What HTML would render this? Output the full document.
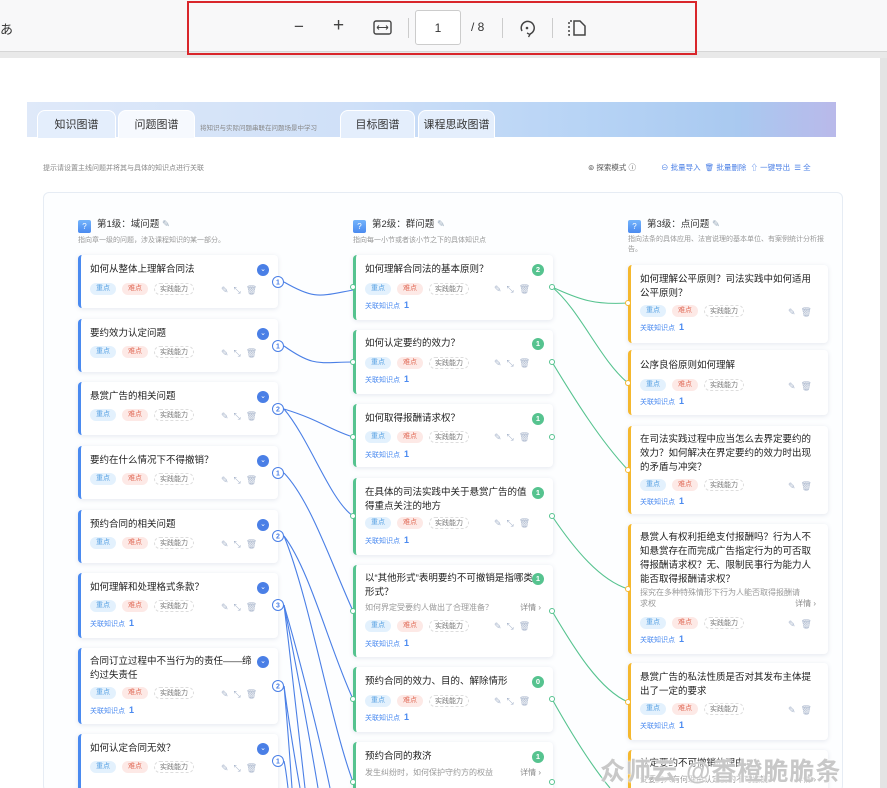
<!DOCTYPE html>
<html><head><meta charset="utf-8">
<style>
*{margin:0;padding:0;box-sizing:border-box}
html,body{width:887px;height:788px;overflow:hidden}
body{background:#e9e9e9;font-family:"Liberation Sans","Noto Sans CJK SC",sans-serif;position:relative;color:#333}
.a{position:absolute}
.tb{left:0;top:0;width:887px;height:52px;background:#f8f8f9;border-bottom:1px solid #d6d6d6}
.page{left:0;top:58px;width:880px;height:730px;background:#fff}
.banner{left:27px;top:102px;width:809px;height:35px;background:linear-gradient(90deg,#dfe9f9 0%,#cfe0f8 40%,#b6d3f5 70%,#a9c9f0 88%,#b9b9ea 100%)}
.tab{top:110px;height:28px;background:#e4eefc;border:1px solid #fff;border-bottom:none;border-radius:8px 8px 0 0;font-size:11px;color:#333;text-align:center;line-height:28px}
.card{position:absolute;background:#fff;border-radius:4px;box-shadow:0 1px 5px rgba(60,80,120,.13);border-left:3px solid #4a8af0}
.c2{border-left-color:#56c38f}.c3{border-left-color:#f5b82e}
.t{position:absolute;left:9px;font-size:9.5px;line-height:14px;color:#222;width:168px}
.c3 .t{width:176px}
.tg{position:absolute;left:9px;height:12px;display:flex;gap:6px}
.tg span{font-size:7px;line-height:12px;border-radius:6px;padding:0 6px}
.k1{background:#e3f1fd;color:#5ba3e3}.k2{background:#fde9e6;color:#e16e5b}.k3{border:1px dashed #ddd;color:#777;padding:0 5px!important}
.rel{position:absolute;left:9px;font-size:7px;color:#4a8af0}
.rel b{font-size:9px;margin-left:4px}
.sub{position:absolute;left:9px;font-size:8px;color:#999;width:175px}
.det{position:absolute;right:12px;font-size:8px;color:#888}
.ic{position:absolute;font-size:9px;color:#a9b6cc}
.chev{position:absolute;width:12px;height:12px;border-radius:50%;background:#4a7fe6;color:#fff;font-size:7px;text-align:center;line-height:12px}
.num{position:absolute;width:12px;height:12px;border-radius:50%;background:#56c38f;color:#fff;font-size:7.5px;font-weight:bold;text-align:center;line-height:12px}
.hd{position:absolute;font-size:9.5px;color:#333}
.hd i{display:inline-block;width:13px;height:13px;background:linear-gradient(#74b4fb,#4a8af0);color:#fff;font-style:normal;font-size:8px;text-align:center;line-height:13px;border-radius:2px;margin-right:6px;vertical-align:-2px}
.ds{position:absolute;font-size:7px;color:#999}
</style></head><body>
<div class="a tb"></div>
<div class="a" style="left:0;top:19px;font-size:13px;color:#333">あ</div>
<div class="a" style="left:187px;top:1px;width:510px;height:54px;border:2px solid #d9262b"></div>
<div class="a" style="left:294px;top:17px;font-size:17px;color:#444">−</div>
<div class="a" style="left:333px;top:15px;font-size:19px;color:#444">+</div>
<svg class="a" style="left:373px;top:20px" width="19" height="15" viewBox="0 0 19 15"><rect x="1" y="1" width="17" height="13" rx="2" fill="none" stroke="#444" stroke-width="1.4"/><path d="M4 7.5h11M4 7.5l2-2M4 7.5l2 2M15 7.5l-2-2M15 7.5l-2 2" stroke="#444" stroke-width="1"/></svg>
<div class="a" style="left:408px;top:18px;width:1px;height:20px;background:#ccc"></div>
<div class="a" style="left:415px;top:10px;width:46px;height:35px;border:1px solid #ccc;border-radius:3px;background:#fff;font-size:12px;text-align:center;line-height:35px">1</div>
<div class="a" style="left:471px;top:20px;font-size:12px;color:#333">/ 8</div>
<div class="a" style="left:502px;top:18px;width:1px;height:20px;background:#ccc"></div>
<svg class="a" style="left:517px;top:18px" width="20" height="20" viewBox="0 0 20 20"><path d="M5 13A6.5 6.5 0 1 1 13 16" fill="none" stroke="#444" stroke-width="1.5"/><path d="M10 15l3 1.5-1.5 2.5" fill="none" stroke="#444" stroke-width="1.3"/><circle cx="10" cy="10" r="1.3" fill="#444"/></svg>
<div class="a" style="left:552px;top:18px;width:1px;height:20px;background:#ccc"></div>
<svg class="a" style="left:567px;top:19px" width="20" height="18" viewBox="0 0 20 18"><path d="M7 2h6l5 5v9H7z" fill="none" stroke="#444" stroke-width="1.5"/><path d="M5 2H2v14h3" fill="none" stroke="#444" stroke-width="1.5" stroke-dasharray="2 2"/></svg>
<div class="a page"></div>
<div class="a banner"></div>
<div class="a tab" style="left:37px;width:79px">知识图谱</div>
<div class="a tab" style="left:118px;width:77px;background:#f6f9fe">问题图谱</div>
<div class="a" style="left:200px;top:122px;font-size:6.5px;color:#888">将知识与实际问题串联在问题场景中学习</div>
<div class="a tab" style="left:340px;width:75px">目标图谱</div>
<div class="a tab" style="left:418px;width:77px">课程思政图谱</div>
<div class="a" style="left:43px;top:163px;font-size:7px;color:#888">提示请设置主线问题并将其与具体的知识点进行关联</div>
<div class="a" style="left:588px;top:162px;font-size:7.5px;color:#555">⊚ 探索模式 ⓘ</div>
<div class="a" style="left:661px;top:162px;font-size:7.5px;color:#4a7fe6">⊖ 批量导入 &nbsp;🗑 批量删除 &nbsp;⇧ 一键导出 &nbsp;☰ 全</div>
<div class="a" style="left:43px;top:192px;width:800px;height:600px;border:1px solid #e6ecf4;border-radius:6px;background:#fdfeff"></div>

<div class="hd" style="left:78px;top:216px"><i>?</i>第1级：域问题 <span style="color:#9ab">✎</span></div>
<div class="ds" style="left:78px;top:235px">指向章一级的问题，涉及课程知识的某一部分。</div>
<div class="hd" style="left:353px;top:216px"><i>?</i>第2级：群问题 <span style="color:#9ab">✎</span></div>
<div class="ds" style="left:353px;top:235px">指向每一小节或者该小节之下的具体知识点</div>
<div class="hd" style="left:628px;top:216px"><i>?</i>第3级：点问题 <span style="color:#9ab">✎</span></div>
<div class="ds" style="left:628px;top:235px;width:200px;line-height:10px">指向法条的具体应用、法官说理的基本单位、有案例统计分析报告。</div>

<div class="card" style="left:78px;top:255px;width:200px;height:53px"><div class="t" style="top:8px">如何从整体上理解合同法</div><div class="tg" style="top:28px"><span class="k1">重点</span><span class="k2">难点</span><span class="k3">实践能力</span></div><div class="chev" style="left:176px;top:9px">⌄</div><div class="ic" style="left:140px;top:30px">✎ &nbsp;⤡ &nbsp;🗑</div></div>
<div class="card" style="left:78px;top:319px;width:200px;height:53px"><div class="t" style="top:8px">要约效力认定问题</div><div class="tg" style="top:27px"><span class="k1">重点</span><span class="k2">难点</span><span class="k3">实践能力</span></div><div class="chev" style="left:176px;top:9px">⌄</div><div class="ic" style="left:140px;top:29px">✎ &nbsp;⤡ &nbsp;🗑</div></div>
<div class="card" style="left:78px;top:382px;width:200px;height:53px"><div class="t" style="top:8px">悬赏广告的相关问题</div><div class="tg" style="top:27px"><span class="k1">重点</span><span class="k2">难点</span><span class="k3">实践能力</span></div><div class="chev" style="left:176px;top:9px">⌄</div><div class="ic" style="left:140px;top:29px">✎ &nbsp;⤡ &nbsp;🗑</div></div>
<div class="card" style="left:78px;top:446px;width:200px;height:53px"><div class="t" style="top:8px">要约在什么情况下不得撤销？</div><div class="tg" style="top:27px"><span class="k1">重点</span><span class="k2">难点</span><span class="k3">实践能力</span></div><div class="chev" style="left:176px;top:9px">⌄</div><div class="ic" style="left:140px;top:29px">✎ &nbsp;⤡ &nbsp;🗑</div></div>
<div class="card" style="left:78px;top:510px;width:200px;height:53px"><div class="t" style="top:8px">预约合同的相关问题</div><div class="tg" style="top:27px"><span class="k1">重点</span><span class="k2">难点</span><span class="k3">实践能力</span></div><div class="chev" style="left:176px;top:9px">⌄</div><div class="ic" style="left:140px;top:29px">✎ &nbsp;⤡ &nbsp;🗑</div></div>
<div class="card" style="left:78px;top:573px;width:200px;height:65px"><div class="t" style="top:8px">如何理解和处理格式条款？</div><div class="tg" style="top:27px"><span class="k1">重点</span><span class="k2">难点</span><span class="k3">实践能力</span></div><div class="rel" style="top:45px">关联知识点<b>1</b></div><div class="chev" style="left:176px;top:9px">⌄</div><div class="ic" style="left:140px;top:29px">✎ &nbsp;⤡ &nbsp;🗑</div></div>
<div class="card" style="left:78px;top:648px;width:200px;height:76px"><div class="t" style="top:7px">合同订立过程中不当行为的责任——缔约过失责任</div><div class="tg" style="top:39px"><span class="k1">重点</span><span class="k2">难点</span><span class="k3">实践能力</span></div><div class="rel" style="top:57px">关联知识点<b>1</b></div><div class="chev" style="left:176px;top:8px">⌄</div><div class="ic" style="left:140px;top:41px">✎ &nbsp;⤡ &nbsp;🗑</div></div>
<div class="card" style="left:78px;top:734px;width:200px;height:70px"><div class="t" style="top:8px">如何认定合同无效？</div><div class="tg" style="top:27px"><span class="k1">重点</span><span class="k2">难点</span><span class="k3">实践能力</span></div><div class="chev" style="left:176px;top:9px">⌄</div><div class="ic" style="left:140px;top:29px">✎ &nbsp;⤡ &nbsp;🗑</div></div>

<div class="card c2" style="left:353px;top:255px;width:200px;height:65px"><div class="t" style="top:8px">如何理解合同法的基本原则？</div><div class="tg" style="top:28px"><span class="k1">重点</span><span class="k2">难点</span><span class="k3">实践能力</span></div><div class="rel" style="top:45px">关联知识点<b>1</b></div><div class="num" style="left:176px;top:9px">2</div><div class="ic" style="left:138px;top:29px">✎ &nbsp;⤡ &nbsp;🗑</div></div>
<div class="card c2" style="left:353px;top:330px;width:200px;height:64px"><div class="t" style="top:7px">如何认定要约的效力？</div><div class="tg" style="top:27px"><span class="k1">重点</span><span class="k2">难点</span><span class="k3">实践能力</span></div><div class="rel" style="top:44px">关联知识点<b>1</b></div><div class="num" style="left:176px;top:8px">1</div><div class="ic" style="left:138px;top:28px">✎ &nbsp;⤡ &nbsp;🗑</div></div>
<div class="card c2" style="left:353px;top:404px;width:200px;height:63px"><div class="t" style="top:8px">如何取得报酬请求权？</div><div class="tg" style="top:27px"><span class="k1">重点</span><span class="k2">难点</span><span class="k3">实践能力</span></div><div class="rel" style="top:45px">关联知识点<b>1</b></div><div class="num" style="left:176px;top:9px">1</div><div class="ic" style="left:138px;top:28px">✎ &nbsp;⤡ &nbsp;🗑</div></div>
<div class="card c2" style="left:353px;top:478px;width:200px;height:77px"><div class="t" style="top:8px">在具体的司法实践中关于悬赏广告的值得重点关注的地方</div><div class="tg" style="top:39px"><span class="k1">重点</span><span class="k2">难点</span><span class="k3">实践能力</span></div><div class="rel" style="top:57px">关联知识点<b>1</b></div><div class="num" style="left:176px;top:9px">1</div><div class="ic" style="left:138px;top:40px">✎ &nbsp;⤡ &nbsp;🗑</div></div>
<div class="card c2" style="left:353px;top:565px;width:200px;height:92px"><div class="t" style="top:7px">以“其他形式”表明要约不可撤销是指哪类形式？</div><div class="sub" style="top:37px">如何界定受要约人做出了合理准备？</div><div class="det" style="top:37px">详情 ›</div><div class="tg" style="top:55px"><span class="k1">重点</span><span class="k2">难点</span><span class="k3">实践能力</span></div><div class="rel" style="top:73px">关联知识点<b>1</b></div><div class="num" style="left:176px;top:8px">1</div><div class="ic" style="left:138px;top:56px">✎ &nbsp;⤡ &nbsp;🗑</div></div>
<div class="card c2" style="left:353px;top:667px;width:200px;height:65px"><div class="t" style="top:8px">预约合同的效力、目的、解除情形</div><div class="tg" style="top:28px"><span class="k1">重点</span><span class="k2">难点</span><span class="k3">实践能力</span></div><div class="rel" style="top:45px">关联知识点<b>1</b></div><div class="num" style="left:176px;top:9px">0</div><div class="ic" style="left:138px;top:29px">✎ &nbsp;⤡ &nbsp;🗑</div></div>
<div class="card c2" style="left:353px;top:742px;width:200px;height:70px"><div class="t" style="top:8px">预约合同的救济</div><div class="sub" style="top:25px">发生纠纷时，如何保护守约方的权益</div><div class="det" style="top:25px">详情 ›</div><div class="num" style="left:176px;top:9px">1</div></div>

<div class="card c3" style="left:628px;top:265px;width:200px;height:78px"><div class="t" style="top:8px">如何理解公平原则？司法实践中如何适用公平原则？</div><div class="tg" style="top:40px"><span class="k1">重点</span><span class="k2">难点</span><span class="k3">实践能力</span></div><div class="rel" style="top:57px">关联知识点<b>1</b></div><div class="ic" style="left:157px;top:42px">✎ &nbsp;🗑</div></div>
<div class="card c3" style="left:628px;top:350px;width:200px;height:65px"><div class="t" style="top:9px">公序良俗原则如何理解</div><div class="tg" style="top:29px"><span class="k1">重点</span><span class="k2">难点</span><span class="k3">实践能力</span></div><div class="rel" style="top:46px">关联知识点<b>1</b></div><div class="ic" style="left:157px;top:31px">✎ &nbsp;🗑</div></div>
<div class="card c3" style="left:628px;top:426px;width:200px;height:88px"><div class="t" style="top:7px">在司法实践过程中应当怎么去界定要约的效力？如何解决在界定要约的效力时出现的矛盾与冲突？</div><div class="tg" style="top:53px"><span class="k1">重点</span><span class="k2">难点</span><span class="k3">实践能力</span></div><div class="rel" style="top:70px">关联知识点<b>1</b></div><div class="ic" style="left:157px;top:55px">✎ &nbsp;🗑</div></div>
<div class="card c3" style="left:628px;top:524px;width:200px;height:130px"><div class="t" style="top:7px">悬赏人有权利拒绝支付报酬吗？行为人不知悬赏存在而完成广告指定行为的可否取得报酬请求权？无、限制民事行为能力人能否取得报酬请求权？</div><div class="sub" style="top:63px;line-height:11px;width:165px">探究在多种特殊情形下行为人能否取得报酬请求权</div><div class="det" style="top:74px">详情 ›</div><div class="tg" style="top:93px"><span class="k1">重点</span><span class="k2">难点</span><span class="k3">实践能力</span></div><div class="rel" style="top:110px">关联知识点<b>1</b></div><div class="ic" style="left:157px;top:95px">✎ &nbsp;🗑</div></div>
<div class="card c3" style="left:628px;top:663px;width:200px;height:77px"><div class="t" style="top:8px">悬赏广告的私法性质是否对其发布主体提出了一定的要求</div><div class="tg" style="top:40px"><span class="k1">重点</span><span class="k2">难点</span><span class="k3">实践能力</span></div><div class="rel" style="top:57px">关联知识点<b>1</b></div><div class="ic" style="left:157px;top:42px">✎ &nbsp;🗑</div></div>
<div class="card c3" style="left:628px;top:750px;width:200px;height:60px"><div class="t" style="top:7px">认定要约不可撤销的理由</div><div class="sub" style="top:24px">受要约人有何理由认定要约不可撤销？</div><div class="det" style="top:24px">详情 ›</div></div>

<svg class="a" style="left:0;top:0" width="887" height="788">
<g fill="none" stroke="#4a7fe6" stroke-width="1.1">
<path d="M284 282C315 300 320 296 353 290"/>
<path d="M284 346C315 368 320 362 353 362"/>
<path d="M284 409C320 420 330 430 353 437"/>
<path d="M284 409C310 440 330 500 353 516"/>
<path d="M284 473C310 500 330 560 353 611"/>
<path d="M284 536C310 570 330 650 353 699"/>
<path d="M284 536C310 600 330 720 353 782"/>
<path d="M284 605C300 660 320 740 330 788"/>
<path d="M284 605C295 660 310 740 318 788"/>
<path d="M284 605C292 670 300 740 305 788"/>
<path d="M284 686C290 730 295 760 300 788"/>
<path d="M284 686C288 730 290 760 292 788"/>
<path d="M284 761C286 770 287 780 288 788"/>
</g>
<g fill="#fff" stroke="#4a7fe6" stroke-width="1">
<circle cx="278" cy="282" r="5.5"/><circle cx="278" cy="346" r="5.5"/><circle cx="278" cy="409" r="5.5"/><circle cx="278" cy="473" r="5.5"/><circle cx="278" cy="536" r="5.5"/><circle cx="278" cy="605" r="5.5"/><circle cx="278" cy="686" r="5.5"/><circle cx="278" cy="761" r="5.5"/>
</g>
<g font-size="7" fill="#4a7fe6" text-anchor="middle" font-family="Liberation Sans" font-weight="bold">
<text x="278" y="284.5">1</text><text x="278" y="348.5">1</text><text x="278" y="411.5">2</text><text x="278" y="475.5">1</text><text x="278" y="538.5">2</text><text x="278" y="607.5">3</text><text x="278" y="688.5">2</text><text x="278" y="763.5">1</text>
</g>
<g fill="none" stroke="#56c38f" stroke-width="1.1">
<path d="M552 287C580 300 595 305 628 303"/>
<path d="M552 287C580 310 600 360 628 383"/>
<path d="M552 362C575 400 600 440 628 470"/>
<path d="M552 516C575 550 600 580 628 589"/>
<path d="M552 611C575 650 600 690 628 702"/>
<path d="M552 699C575 740 595 770 610 788"/>
</g>
<g fill="#fff" stroke="#56c38f" stroke-width="1">
<circle cx="353" cy="287" r="2.5"/><circle cx="353" cy="362" r="2.5"/><circle cx="353" cy="437" r="2.5"/><circle cx="353" cy="516" r="2.5"/><circle cx="353" cy="611" r="2.5"/><circle cx="353" cy="699" r="2.5"/><circle cx="353" cy="782" r="2.5"/>
<circle cx="552" cy="287" r="2.5"/><circle cx="552" cy="362" r="2.5"/><circle cx="552" cy="437" r="2.5"/><circle cx="552" cy="516" r="2.5"/><circle cx="552" cy="611" r="2.5"/><circle cx="552" cy="699" r="2.5"/><circle cx="552" cy="782" r="2.5"/>
</g>
<g fill="#fff" stroke="#f5b82e" stroke-width="1">
<circle cx="628" cy="303" r="2.5"/><circle cx="628" cy="383" r="2.5"/><circle cx="628" cy="470" r="2.5"/><circle cx="628" cy="589" r="2.5"/><circle cx="628" cy="702" r="2.5"/>
</g>
</svg>
<div class="a" style="left:880px;top:58px;width:7px;height:730px;background:#e4e4e4"></div>
<div class="a" style="left:600px;top:752px;font-size:25px;font-weight:bold;color:#c8c8c8;letter-spacing:1px;text-shadow:0 0 2px #fff,0 0 2px #fff">众师云 @香橙脆脆条</div>
</body></html>
